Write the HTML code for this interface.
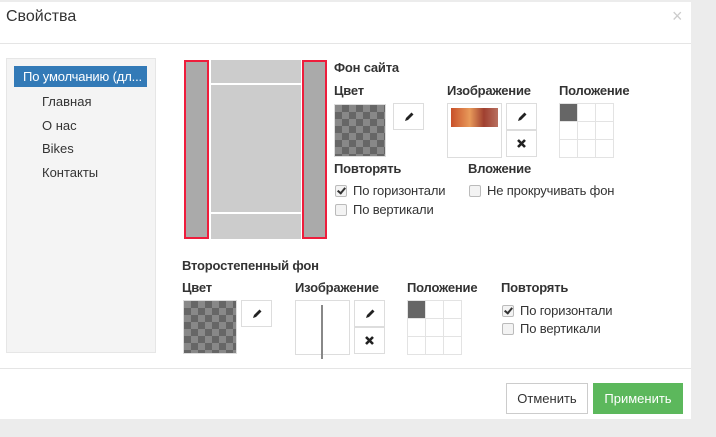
<!DOCTYPE html>
<html><head><meta charset="utf-8"><style>
*{box-sizing:border-box;margin:0;padding:0}
body{width:716px;height:437px;background:#ececec;font-family:"Liberation Sans",sans-serif;font-size:13px;color:#333;position:relative;overflow:hidden}
.a{position:absolute;white-space:nowrap}
.modal{left:0;top:2px;width:691px;height:417px;background:#fff}
.b{font-weight:bold;font-size:13px;letter-spacing:-0.2px}
.chk{width:52px;height:53px;border:1px solid #ddd;background-color:#888;background-image:linear-gradient(45deg,#666 25%,transparent 25%,transparent 75%,#666 75%),linear-gradient(45deg,#666 25%,transparent 25%,transparent 75%,#666 75%);background-size:14px 14px;background-position:0 0,7px 7px}
.btn{width:31px;height:27px;border:1px solid #ddd;background:#fff;display:flex;align-items:center;justify-content:center}
.grid{display:grid;grid-template-columns:repeat(3,18px);grid-template-rows:repeat(3,18px);border-top:1px solid #e3e3e3;border-left:1px solid #e3e3e3}
.grid div{border-right:1px solid #e3e3e3;border-bottom:1px solid #e3e3e3}
.grid div:first-child{background:#666}
.cb{width:12px;height:12px;border:1px solid #bbb;border-radius:2px;background:#f3f3f3;display:inline-block;vertical-align:-2px;margin-right:6px;position:relative}
.cb.on::after{content:"";position:absolute;left:3px;top:0px;width:3px;height:6px;border:solid #333;border-width:0 2px 2px 0;transform:rotate(40deg)}
.li{position:absolute;left:42px;font-size:13px}
.t{letter-spacing:-0.15px}
</style></head><body>
<div class="a modal"></div>
<div class="a" style="left:6px;top:8px;font-size:16px;color:#333">Свойства</div>
<div class="a" style="left:672px;top:6px;font-size:18px;color:#ccc">×</div>
<div class="a" style="left:0;top:43px;width:691px;height:1px;background:#e5e5e5"></div>

<div class="a" style="left:6px;top:58px;width:150px;height:295px;background:#f4f4f4;border:1px solid #e6e6e6"></div>
<div class="a t" style="left:14px;top:66px;width:133px;height:21px;background:#337ab7;color:#fff;padding:3px 0 0 9px;overflow:hidden">По умолчанию (дл...</div>
<div class="li" style="top:94px">Главная</div>
<div class="li" style="top:118px">О нас</div>
<div class="li" style="top:141px">Bikes</div>
<div class="li" style="top:165px">Контакты</div>

<div class="a" style="left:184px;top:60px;width:25px;height:179px;background:#aaa;border:2px solid #ee1d3c"></div>
<div class="a" style="left:302px;top:60px;width:25px;height:179px;background:#aaa;border:2px solid #ee1d3c"></div>
<div class="a" style="left:211px;top:60px;width:90px;height:23px;background:#ccc"></div>
<div class="a" style="left:211px;top:85px;width:90px;height:127px;background:#ccc"></div>
<div class="a" style="left:211px;top:214px;width:90px;height:25px;background:#ccc"></div>

<svg width="0" height="0" style="position:absolute"><defs>
<g id="pen"><path d="M2 10 L3 7 L8.5 1.5 L10.5 3.5 L5 9 Z" fill="#222"/></g>
<g id="x"><path d="M2 2 L9 9 M9 2 L2 9" stroke="#222" stroke-width="2.6"/></g>
</defs></svg>

<div class="a b" style="left:334px;top:60px">Фон сайта</div>
<div class="a b" style="left:334px;top:83px">Цвет</div>
<div class="a chk" style="left:334px;top:104px"></div>
<div class="a btn" style="left:393px;top:103px"><svg width="12" height="12"><use href="#pen"/></svg></div>
<div class="a b" style="left:447px;top:83px">Изображение</div>
<div class="a" style="left:447px;top:103px;width:55px;height:55px;border:1px solid #ddd"></div>
<div class="a" style="left:451px;top:108px;width:47px;height:19px;background:linear-gradient(90deg,#c8502a,#e89a5a 40%,#a04030 70%,#b87060)"></div>
<div class="a btn" style="left:506px;top:103px"><svg width="12" height="12"><use href="#pen"/></svg></div>
<div class="a btn" style="left:506px;top:130px"><svg width="11" height="11"><use href="#x"/></svg></div>
<div class="a b" style="left:559px;top:83px">Положение</div>
<div class="a grid" style="left:559px;top:103px"><div></div><div></div><div></div><div></div><div></div><div></div><div></div><div></div><div></div></div>
<div class="a b" style="left:334px;top:161px">Повторять</div>
<div class="a t" style="left:335px;top:183px"><span class="cb on"></span>По горизонтали</div>
<div class="a t" style="left:335px;top:202px"><span class="cb"></span>По вертикали</div>
<div class="a b" style="left:468px;top:161px">Вложение</div>
<div class="a t" style="left:469px;top:183px"><span class="cb"></span>Не прокручивать фон</div>

<div class="a b" style="left:182px;top:258px">Второстепенный фон</div>
<div class="a b" style="left:182px;top:280px">Цвет</div>
<div class="a chk" style="left:183px;top:300px;width:54px;height:54px"></div>
<div class="a btn" style="left:241px;top:300px"><svg width="12" height="12"><use href="#pen"/></svg></div>
<div class="a b" style="left:295px;top:280px">Изображение</div>
<div class="a" style="left:295px;top:300px;width:55px;height:55px;border:1px solid #ddd"></div>
<div class="a" style="left:321px;top:305px;width:2px;height:54px;background:#888"></div>
<div class="a btn" style="left:354px;top:300px"><svg width="12" height="12"><use href="#pen"/></svg></div>
<div class="a btn" style="left:354px;top:327px"><svg width="11" height="11"><use href="#x"/></svg></div>
<div class="a b" style="left:407px;top:280px">Положение</div>
<div class="a grid" style="left:407px;top:300px"><div></div><div></div><div></div><div></div><div></div><div></div><div></div><div></div><div></div></div>
<div class="a b" style="left:501px;top:280px">Повторять</div>
<div class="a t" style="left:502px;top:303px"><span class="cb on"></span>По горизонтали</div>
<div class="a t" style="left:502px;top:321px"><span class="cb"></span>По вертикали</div>

<div class="a" style="left:0;top:368px;width:691px;height:1px;background:#e5e5e5"></div>
<div class="a" style="left:506px;top:383px;width:82px;height:31px;border:1px solid #ccc;background:#fff;text-align:center;line-height:29px">Отменить</div>
<div class="a" style="left:593px;top:383px;width:90px;height:31px;background:#5cb85c;color:#fff;text-align:center;line-height:31px">Применить</div>
</body></html>
